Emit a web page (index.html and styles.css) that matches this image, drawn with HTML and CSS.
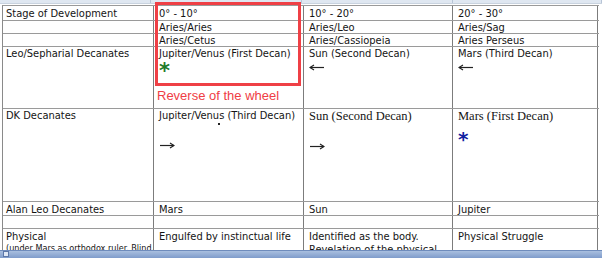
FILE: index.html
```html
<!DOCTYPE html>
<html>
<head>
<meta charset="utf-8">
<link rel="stylesheet" href="styles.css">
</head>
<body>
<div class="frame">
  <div class="topstrip">
    <span class="seg s1"></span><span class="seg s2"></span><span class="seg s3"></span><span class="seg s4"></span>
  </div>
  <div class="doc">
    <div class="grid">
      <div class="row r1"><div class="cell">Stage of Development</div><div class="cell">0° - 10°</div><div class="cell">10° - 20°</div><div class="cell">20° - 30°</div></div>
      <div class="row r2"><div class="cell"></div><div class="cell">Aries/Aries</div><div class="cell">Aries/Leo</div><div class="cell">Aries/Sag</div></div>
      <div class="row r3"><div class="cell"></div><div class="cell">Aries/Cetus</div><div class="cell">Aries/Cassiopeia</div><div class="cell">Aries Perseus</div></div>
      <div class="row r4">
        <div class="cell">Leo/Sepharial Decanates</div>
        <div class="cell">Jupiter/Venus (First Decan)<div class="mark green">*</div></div>
        <div class="cell">Sun (Second Decan)<div class="arrowline"><svg class="arrow" width="16" height="7" viewBox="0 0 16 7"><path d="M1 3.5H15" stroke="#222" stroke-width="1.2"/><path d="M5 1L1 3.5L5 6" fill="none" stroke="#222" stroke-width="1.2"/></svg></div></div>
        <div class="cell">Mars (Third Decan)<div class="arrowline"><svg class="arrow" width="16" height="7" viewBox="0 0 16 7"><path d="M1 3.5H15" stroke="#222" stroke-width="1.2"/><path d="M5 1L1 3.5L5 6" fill="none" stroke="#222" stroke-width="1.2"/></svg></div></div>
      </div>
      <div class="row r5">
        <div class="cell">DK Decanates</div>
        <div class="cell">Jupiter/Venus (Third Decan)<div class="dotline"><span class="dot"></span></div><div class="arrowline2"><svg class="arrow" width="16" height="7" viewBox="0 0 16 7"><path d="M1 3.5H15" stroke="#222" stroke-width="1.2"/><path d="M11 1L15 3.5L11 6" fill="none" stroke="#222" stroke-width="1.2"/></svg></div></div>
        <div class="cell"><div class="serif">Sun (Second Decan)</div><div class="arrowline3"><svg class="arrow" width="16" height="7" viewBox="0 0 16 7"><path d="M1 3.5H15" stroke="#222" stroke-width="1.2"/><path d="M11 1L15 3.5L11 6" fill="none" stroke="#222" stroke-width="1.2"/></svg></div></div>
        <div class="cell"><div class="serif">Mars (First Decan)</div><div class="mark blue">*</div></div>
      </div>
      <div class="row r6"><div class="cell">Alan Leo Decanates</div><div class="cell">Mars</div><div class="cell">Sun</div><div class="cell">Jupiter</div></div>
      <div class="row r7"><div class="cell"></div><div class="cell"></div><div class="cell"></div><div class="cell"></div></div>
      <div class="row r8">
        <div class="cell">Physical<div class="small">(under Mars as orthodox ruler. Blind,</div></div>
        <div class="cell">Engulfed by instinctual life</div>
        <div class="cell">Identified as the body.<br>Revelation of the physical</div>
        <div class="cell">Physical Struggle</div>
      </div>
    </div>
  </div>
  <div class="statusbar"><span class="sbicon"></span></div>
  <div class="redbox"></div>
  <div class="redlabel">Reverse of the wheel</div>
</div>
</body>
</html>
```

FILE: styles.css
```css
html, body {
  margin: 0;
  padding: 0;
  background: #ffffff;
}
.frame {
  position: relative;
  width: 602px;
  height: 258px;
  display: flex;
  flex-direction: column;
  overflow: hidden;
  font-family: "DejaVu Sans Condensed", "Liberation Sans", sans-serif;
  color: #141414;
}
.topstrip {
  height: 4px;
  flex: none;
  background: #dfe7f1;
  display: flex;
  border-bottom: 1px solid #c9d3df;
  box-sizing: border-box;
}
.seg {
  height: 3px;
  border-right: 1px solid #b7c4d6;
}
.s1 { width: 150px; }
.s2 { width: 150px; }
.s3 { width: 150px; }
.s4 { width: 148px; }
.doc {
  flex: 1;
  overflow: hidden;
  padding: 1px 0 0 2px;
}
.grid {
  width: 596px;
  border-top: 1px solid #9a9a9a;
  border-left: 1px solid #8a8a8a;
  font-size: 11px;
  line-height: 13px;
}
.row {
  display: grid;
  grid-template-columns: 151px 150px 149px 145px;
  border-bottom: 1px solid #9a9a9a;
  box-sizing: border-box;
}
.cell {
  border-right: 1px solid #7c7c7c;
  padding: 0 4px 0 5px;
  white-space: nowrap;
  overflow: hidden;
}
.cell:first-child { padding-left: 3px; }
.r1 { height: 15px; }
.r2 { height: 13px; }
.r3 { height: 13px; }
.r4 { height: 62px; }
.r5 { height: 93px; }
.r6 { height: 14px; }
.r7 { height: 13px; }
.r8 { height: 60px; }
.r1 .cell { padding-top: 1px; }
.r6 .cell { padding-top: 1px; }
.r8 .cell { padding-top: 1px; }
.mark {
  font-weight: bold;
  font-family: "DejaVu Sans", sans-serif;
}
.green {
  color: #1f7a2a;
  font-size: 21px;
  line-height: 20px;
  margin-top: 1px;
}
.blue {
  color: #1020a0;
  font-size: 20px;
  line-height: 20px;
  margin-top: 5px;
}
.arrowline { margin-top: 4px; }
.arrowline2 { margin-top: 15px; }
.arrowline3 { margin-top: 19px; }
.arrow { display: block; }
.serif {
  font-family: "Liberation Serif", serif;
  font-size: 12.5px;
  line-height: 15px;
}
.dotline { height: 5px; position: relative; }
.dot {
  position: absolute;
  left: 59px;
  top: 1px;
  width: 2px;
  height: 2px;
  background: #222;
}
.small {
  font-size: 9px;
  line-height: 11px;
}
.redbox {
  position: absolute;
  left: 155px;
  top: 2px;
  width: 140px;
  height: 78px;
  border: 3px solid #ef4046;
}
.redlabel {
  position: absolute;
  left: 157px;
  top: 88px;
  color: #ef3d45;
  font-family: "Liberation Sans", sans-serif;
  font-size: 13px;
  line-height: 15px;
  white-space: nowrap;
}
.statusbar {
  flex: none;
  height: 8px;
  background: linear-gradient(#a9bfdf, #7f9ccb);
  border-top: 1px solid #6f8cbc;
  position: relative;
  box-sizing: border-box;
}
.sbicon {
  position: absolute;
  left: 3px;
  top: 0;
  width: 6px;
  height: 6px;
  background: #dfe8f5;
  border: 1px solid #5c77a8;
  box-sizing: border-box;
}
```
